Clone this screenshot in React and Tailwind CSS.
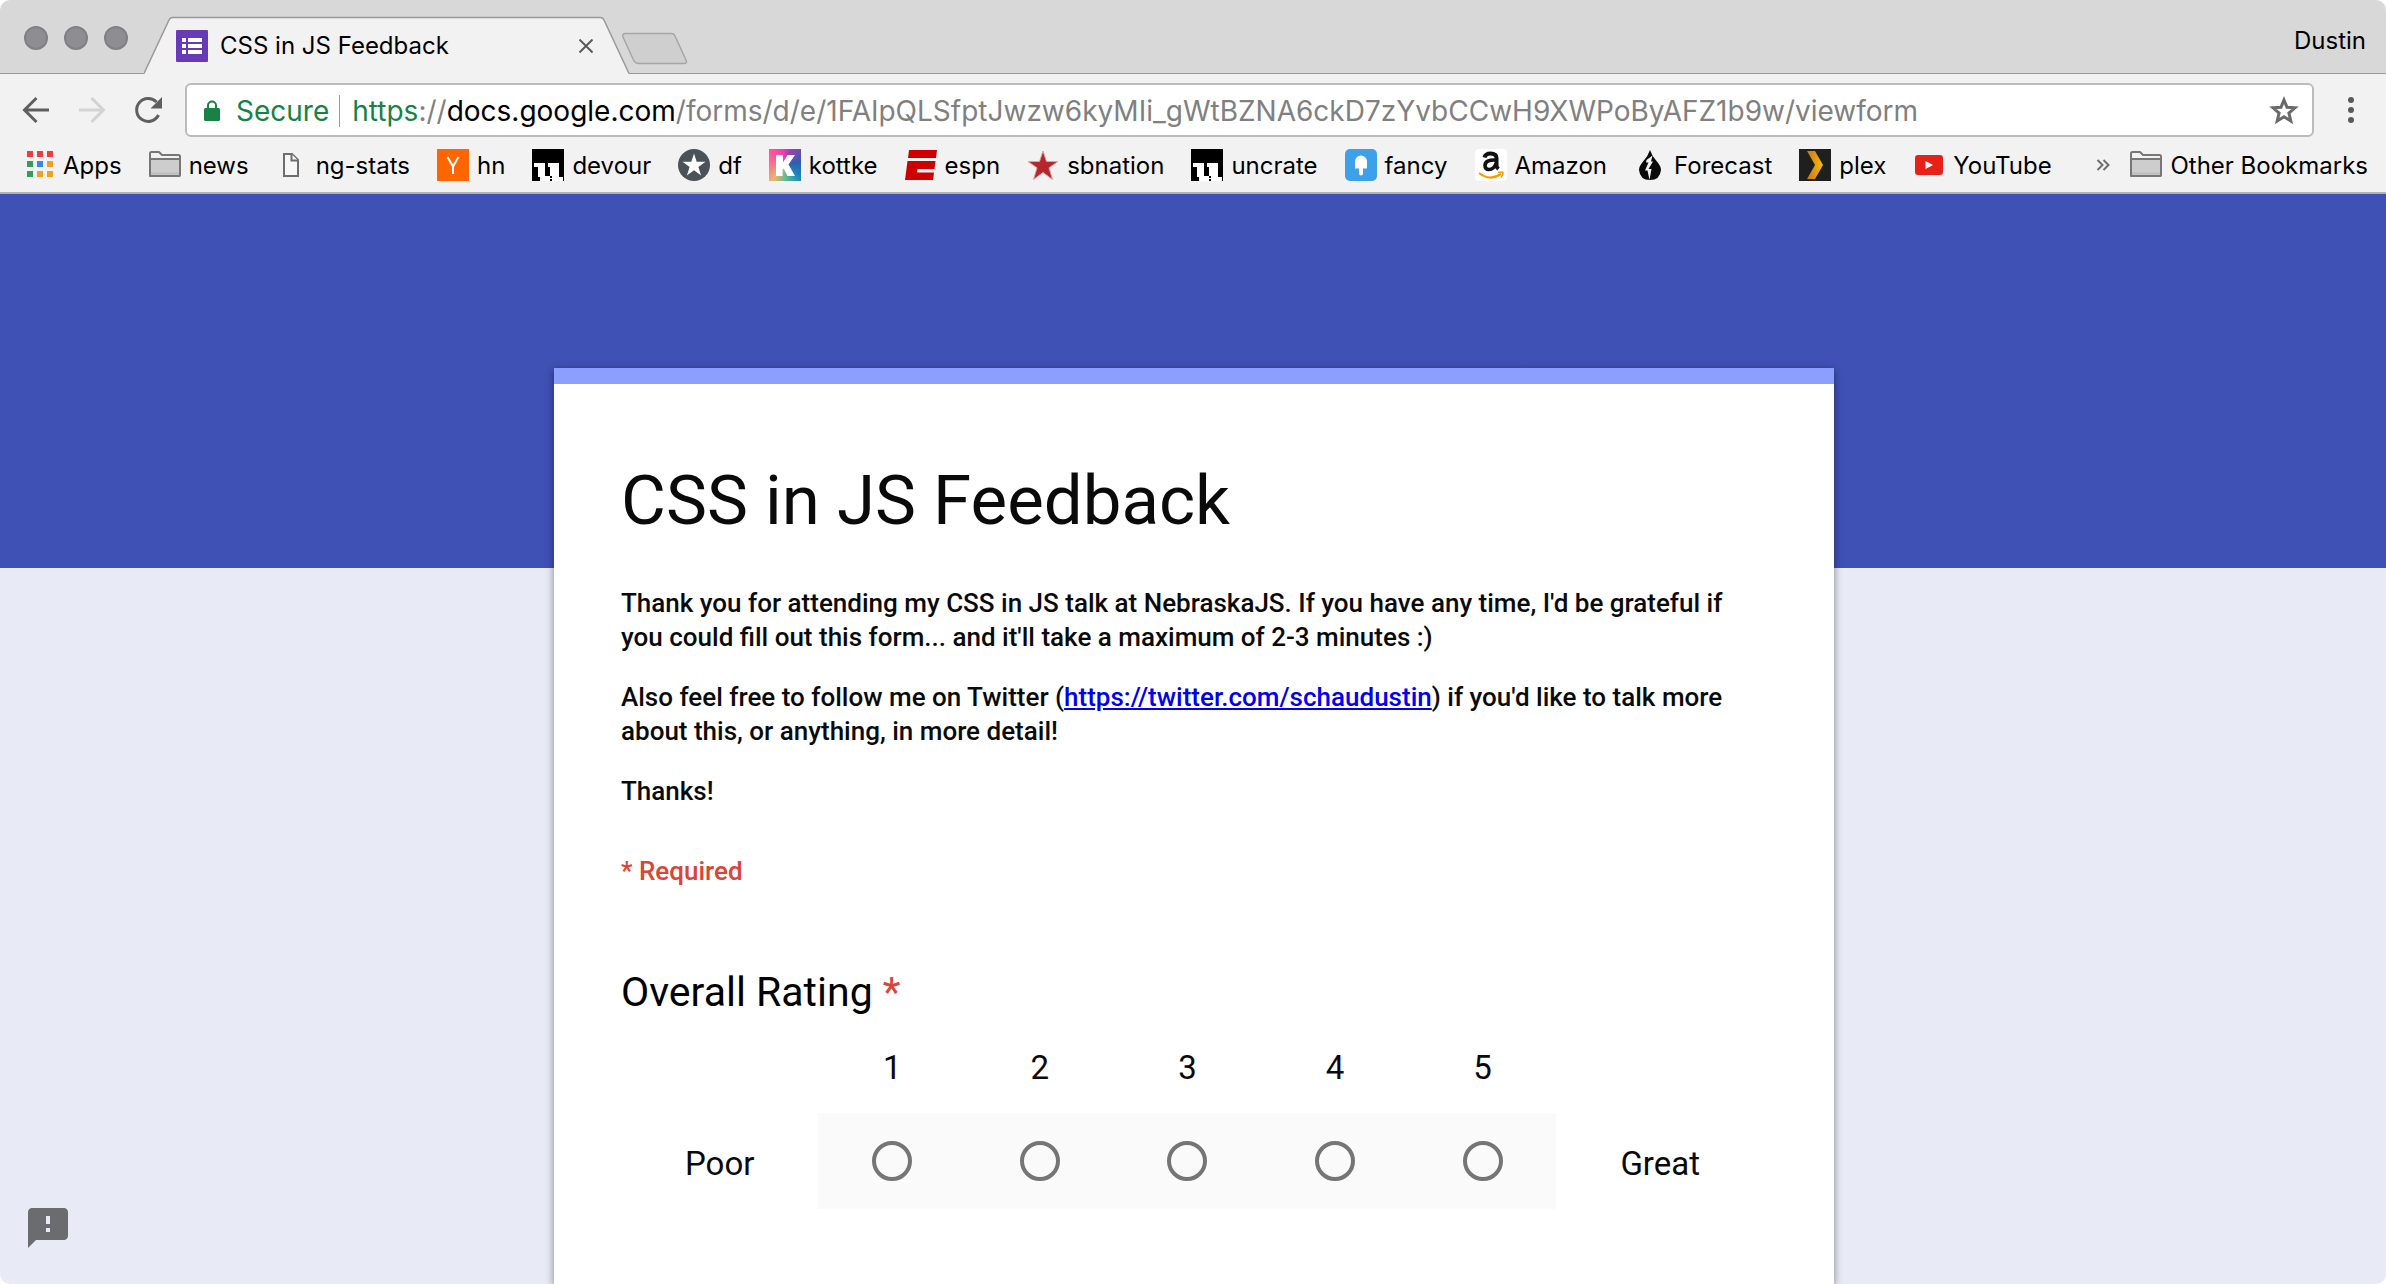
import React from "react";

const ui = "font-['Inter',sans-serif]";

function Folder() {
  return (
    <svg viewBox="0 0 32 32" className="size-8 shrink-0" fill="#cdcdcd" stroke="#777" strokeWidth="2" strokeLinejoin="round">
      <path d="M1 27V4.500q0-1.500 1.500-1.500H10l3 3H29.500Q31 6 31 7.500V25.500Q31 27 29.500 27Z" fill="#f2f2f2" />
      <path d="M1 10H31V25.500Q31 27 29.500 27H2.500Q1 27 1 25.500Z" />
      <path d="M2 24.500H30" stroke="#bdbdbd" />
    </svg>
  );
}

function Uncrate() {
  return (
    <svg viewBox="0 0 32 32" className="size-8 shrink-0" shapeRendering="crispEdges">
      <path d="M0 0H32V32H0Z" fill="#000" />
      <path d="M2 14H13V27H18V18H16V14H27V28H31V32H8V28H6V18H2Z" fill="#fff" />
      <path d="M18 27H20V29H18ZM18 30H20V32H18Z" fill="#000" />
    </svg>
  );
}

const icons = {
  apps: (
    <svg viewBox="0 0 32 32" className="size-8 shrink-0">
      {[
        ["#f33b3b", "#f33b3b", "#f33b3b"],
        ["#359d5a", "#2a8cf4", "#f0a022"],
        ["#359d5a", "#f0a022", "#f0a022"],
      ].map((row, r) => row.map((c, i) => <rect key={r + "-" + i} x={4 + i * 10} y={2 + r * 10} width="6" height="6" fill={c} />))}
    </svg>
  ),
  folder: <Folder />,
  file: (
    <svg viewBox="0 0 32 32" className="size-8 shrink-0" fill="#f7f7f7" stroke="#6e6e6e" strokeWidth="2">
      <path d="M8 5H16L22 11V27H8Z" />
      <path d="M15.500 5V11.500H22" />
    </svg>
  ),
  hn: (
    <svg viewBox="0 0 32 32" className="size-8 shrink-0">
      <path d="M0 0H32V32H0Z" fill="#ff6600" />
      <path d="M10.500 8L16 17.500L21.500 8M16 17V25" fill="none" stroke="#fff" strokeWidth="2" />
    </svg>
  ),
  uncrate: <Uncrate />,
  df: (
    <svg viewBox="0 0 32 32" className="size-8 shrink-0">
      <circle cx="16" cy="16" r="16" fill="#4a525a" />
      <path d="M16 4.500L18.700 12.800H27.500L20.400 18L23.100 26.400L16 21.200L8.900 26.400L11.600 18L4.500 12.800H13.300Z" fill="#fff" />
    </svg>
  ),
  kottke: (
    <span className="flex size-8 shrink-0 items-center justify-center bg-[conic-gradient(from_20deg,#a03fae,#2b5fae_60deg,#1f86b8_110deg,#4fb99a_150deg,#e8b56f_200deg,#f67f86_240deg,#ff4fa0_300deg,#f03fae_330deg,#a03fae)]">
      <svg viewBox="0 0 32 32" className="size-8" fill="#fff">
        <path d="M7 6H14V13.500L18.500 6H26L19.500 15.500L26 27H18.500L14.500 19.500L13.500 21V27H7Z" />
      </svg>
    </span>
  ),
  espn: (
    <svg viewBox="0 0 32 32" className="size-8 shrink-0" fill="#cc0000">
      <path d="M4 1H32L31 9H3ZM2.500 12H30.500L29.500 20H12.500L12 23.500H29L28 31H0Z" />
    </svg>
  ),
  sbnation: (
    <svg viewBox="0 0 32 32" className="size-8 shrink-0">
      <path d="M16 2L19.500 12.500H31L22 18.800L25.500 30.500L16 23.500L6.500 30.500L10 18.800L1 12.500H12.500Z" fill="#b5262d" stroke="#d9a3a3" strokeWidth="1" />
    </svg>
  ),
  fancy: (
    <svg viewBox="0 0 32 32" className="size-8 shrink-0">
      <rect width="32" height="32" rx="5" fill="#3ca1e8" />
      <path d="M10 12.500a6 6 0 0 1 12 0V19.500H18V24.500a2 2 0 0 1-4 0V19.500H10Z" fill="#fff" />
    </svg>
  ),
  amazon: (
    <svg viewBox="0 0 32 32" className="size-8 shrink-0">
      <rect width="32" height="32" rx="4" fill="#fff" />
      <path d="M9.500 8.500Q10.500 4.500 15.500 4.500Q21.500 4.500 21.500 9V16.500Q21.500 18.500 23.500 20" fill="none" stroke="#111" strokeWidth="4" />
      <path d="M21 11Q10 10.500 10 16.500Q10 20.500 14 20.500Q19 20.500 21 14.500" fill="none" stroke="#111" strokeWidth="3.600" />
      <path d="M4 24Q15 32.500 26 25" fill="none" stroke="#f90" strokeWidth="2.200" />
      <path d="M23 23.500Q28 22.500 28 23.500Q28 26 26 28.500" fill="none" stroke="#f90" strokeWidth="1.600" />
    </svg>
  ),
  forecast: (
    <svg viewBox="0 0 32 32" className="size-8 shrink-0">
      <path d="M16 1Q18 7 22.500 12Q27 17 27 21Q26 31 16 31Q6 31 5 21Q5 17 9.500 12Q14 7 16 1Z" fill="#0a0a0a" />
      <path d="M12.500 11L18.500 6.500L17 12.500H19L14.500 20H17.500L15.500 31L13.500 21.500H11L14.500 13.500H12Z" fill="#f2f2f2" />
    </svg>
  ),
  plex: (
    <svg viewBox="0 0 32 32" className="size-8 shrink-0">
      <defs>
        <radialGradient id="plexGold" cx="1" cy="0.500" r="1">
          <stop offset="0" stopColor="#f9be03" />
          <stop offset="1" stopColor="#cc7c19" />
        </radialGradient>
      </defs>
      <path d="M0 0H32V32H0Z" fill="#1f1f1f" />
      <path d="M8 2H16L24 16L16 30H8L16 16Z" fill="url(#plexGold)" />
    </svg>
  ),
  youtube: (
    <svg viewBox="0 0 32 32" className="size-8 shrink-0">
      <rect x="2" y="6" width="28" height="20" rx="3" fill="#e62117" />
      <path d="M12.500 12V20L20 16Z" fill="#fff" />
    </svg>
  ),
};

const bookmarks = [
  ["apps", "Apps"],
  ["folder", "news"],
  ["file", "ng-stats"],
  ["hn", "hn"],
  ["uncrate", "devour"],
  ["df", "df"],
  ["kottke", "kottke"],
  ["espn", "espn"],
  ["sbnation", "sbnation"],
  ["uncrate", "uncrate"],
  ["fancy", "fancy"],
  ["amazon", "Amazon"],
  ["forecast", "Forecast"],
  ["plex", "plex"],
  ["youtube", "YouTube"],
];

function TitleBar() {
  return (
    <header className="flex h-[74px] items-end justify-between border-b border-[#999] bg-[#d8d8d8]">
      <div className="flex h-full">
        <div className="flex w-36 items-center gap-4 pt-0.5 pl-6">
          {["Close window", "Minimise window", "Zoom window"].map((n) => (
            <button key={n} aria-label={n} className="size-6 rounded-full border-2 border-[#807f84] bg-[#8e8d92]" />
          ))}
        </div>
        <div className="relative mt-4 h-[58px] w-[486px]">
          <svg viewBox="0 0 486 58" className="absolute inset-0 h-[58px] w-[486px]">
            <path d="M0 58L25 4Q26 1.500 29 1.500H456Q459 1.500 460 4L485 58Z" fill="#f2f2f2" />
            <path d="M0 57.500L25 4Q26 1.500 29 1.500H456Q459 1.500 460 4L485 57.500" fill="none" stroke="#999" strokeWidth="1.500" />
          </svg>
          <div className="relative flex h-[60px] items-center pr-[37px] pl-8">
            <svg viewBox="0 0 32 32" className="mr-3 size-8 shrink-0">
              <rect width="32" height="32" rx="1" fill="#673ab7" />
              <path d="M6 8H10V12H6ZM12 8H26V12H12ZM6 14H10V18H6ZM12 14H26V18H12ZM6 20H10V24H6ZM12 20H26V24H12Z" fill="#fff" />
            </svg>
            <span className="flex-1 text-2xl text-black">CSS in JS Feedback</span>
            <button aria-label="Close tab">
              <svg viewBox="0 0 14 14" className="size-3.5" stroke="#5a5a5a" strokeWidth="2">
                <path d="M0.500 0.500L13.500 13.500M13.500 0.500L0.500 13.500" />
              </svg>
            </button>
          </div>
        </div>
        <button aria-label="New tab" className="-ml-2 self-start pt-8">
          <svg viewBox="0 0 66 34" className="h-[34px] w-[66px]">
            <path d="M3 1.500H49Q52 1.500 53 4L64 28Q65.500 31.500 62 31.500H17Q13 31.500 11.500 28L1 5Q0 1.500 3 1.500Z" fill="#cfcfcf" stroke="#a6a6a6" strokeWidth="1.500" />
          </svg>
        </button>
      </div>
      <span className="mr-5 mb-4 text-2xl text-black">Dustin</span>
    </header>
  );
}

function Toolbar() {
  return (
    <div className="flex items-center bg-[#f2f2f2] pt-[9px] pr-8 pl-5">
      <div className="flex gap-6">
        <button aria-label="Back">
          <svg viewBox="0 0 32 32" className="size-8" fill="none" stroke="#5f5f5f" strokeWidth="3">
            <path d="M29 16H5M16.500 4L4.500 16L16.500 28" />
          </svg>
        </button>
        <button aria-label="Forward" disabled>
          <svg viewBox="0 0 32 32" className="size-8" fill="none" stroke="#d3d3d3" strokeWidth="3">
            <path d="M3 16H27M15.500 4L27.500 16L15.500 28" />
          </svg>
        </button>
        <button aria-label="Reload">
          <svg viewBox="0 0 32 32" className="size-8">
            <path d="M26.500 21A11.500 11.500 0 1 1 24.500 8" fill="none" stroke="#5f5f5f" strokeWidth="3" />
            <path d="M30 3V14.500H18.500Z" fill="#5f5f5f" />
          </svg>
        </button>
      </div>
      <div className="ml-[21px] flex h-[54px] flex-1 items-center rounded-md border-2 border-[#bbb] bg-white pt-0.5 pr-3 pl-[17px] text-[28px]">
        <svg viewBox="0 0 16 22" className="mr-4 h-[22px] w-4">
          <path d="M4 10V5.500a4 4 0 0 1 8 0V10" fill="none" stroke="#188245" strokeWidth="2" />
          <rect y="8" width="16" height="13" rx="1.500" fill="#188245" />
        </svg>
        <span className="text-[#188245]">Secure</span>
        <span className="mr-3 ml-2.5 h-8 w-px bg-[#999]" />
        <div className="flex-1 whitespace-nowrap text-[#808080]">
          <span className="text-[#188245]">https</span>://<span className="text-black">docs.google.com</span>/forms/d/e/1FAIpQLSfptJwzw6kyMIi_gWtBZNA6ckD7zYvbCCwH9XWPoByAFZ1b9w/viewform
        </div>
        <button aria-label="Bookmark this page">
          <svg viewBox="0 0 32 32" className="size-8" fill="none" stroke="#6a6a6a" strokeWidth="3">
            <path d="M16 5L19 12.200L27 12.800L20.900 18L22.800 26L16 21.700L9.200 26L11.100 18L5 12.800L13 12.200Z" />
          </svg>
        </button>
      </div>
      <button aria-label="Menu" className="ml-[34px] flex flex-col gap-1">
        <i className="size-1.5 rounded-full bg-[#5a5a5a]" />
        <i className="size-1.5 rounded-full bg-[#5a5a5a]" />
        <i className="size-1.5 rounded-full bg-[#5a5a5a]" />
      </button>
    </div>
  );
}

function Bookmarks() {
  return (
    <nav className="flex h-[57px] items-center justify-between border-b-2 border-[#b3b3b3] bg-[#f2f2f2] pt-px pr-[18px] pl-[23px] text-2xl text-black">
      <div className="flex gap-[27px]">
        {bookmarks.map(([icon, label]) => (
          <a key={label} href="#" className="flex items-center gap-2">
            {icons[icon]}
            <span className="pt-0.5">{label}</span>
          </a>
        ))}
      </div>
      <div className="flex items-center">
        <button aria-label="More bookmarks" className="mr-5">
          <svg viewBox="0 0 14 14" className="size-3.5" fill="none" stroke="#6e6e6e" strokeWidth="2">
            <path d="M1.500 2L6.500 7L1.500 12M7.500 2L12.500 7L7.500 12" />
          </svg>
        </button>
        <a href="#" className="flex items-center gap-2">
          <Folder />
          <span className="pt-0.5">Other Bookmarks</span>
        </a>
      </div>
    </nav>
  );
}

function Rating() {
  return (
    <fieldset className="mt-[77px]">
      <legend className="text-[41px] leading-[54px] text-black">
        Overall Rating <span className="text-[#db4437]">*</span>
      </legend>
      <div className="flex items-end pr-[3px] text-[33px] leading-10">
        <span className="flex h-24 items-center justify-center px-16 pt-1.5">Poor</span>
        <div className="flex flex-1">
          {[1, 2, 3, 4, 5].map((n) => (
            <label key={n} className="flex flex-1 flex-col items-center">
              <span className="pt-[29px] pb-[25px]">{n}</span>
              <span className="flex h-24 items-center justify-center self-stretch bg-[#fafafa]">
                <input type="radio" name="rating" value={n} className="size-10 appearance-none rounded-full border-4 border-[#757575] checked:bg-[#3f51b5]" />
              </span>
            </label>
          ))}
        </div>
        <span className="flex h-24 items-center justify-center px-16 pt-1.5">Great</span>
      </div>
    </fieldset>
  );
}

export default function App() {
  return (
    <div className="h-screen bg-white">
      <div className={"relative flex h-full flex-col overflow-hidden rounded-[10px] " + ui}>
        <TitleBar />
        <Toolbar />
        <Bookmarks />
        <main className="min-h-0 flex-1 overflow-hidden bg-[#e8eaf6] bg-linear-to-b from-[#3f51b5] to-[#3f51b5] bg-[length:100%_374px] bg-no-repeat pt-[174px] pl-0.5 font-['Roboto',sans-serif] text-[#0a0a0a]">
          <form className="mx-auto min-h-full max-w-[1280px] border-t-[16px] border-[#8c9eff] bg-white px-[67px] pt-[71px] shadow-[0_2px_8px_rgba(0,0,0,0.45)]">
            <h1 className="text-[69px] leading-[92px]">CSS in JS Feedback</h1>
            <div className="mt-[39px] space-y-[26px] text-[26px] leading-[34px] font-medium">
              <p>
                Thank you for attending my CSS in JS talk at NebraskaJS. If you have any time, I'd be grateful if you could fill out this form... and it'll take a maximum of 2-3 minutes :)
              </p>
              <p>
                Also feel free to follow me on Twitter (
                <a href="https://twitter.com/schaudustin" className="text-[#0000ee] underline">
                  https://twitter.com/schaudustin
                </a>
                ) if you'd like to talk more about this, or anything, in more detail!
              </p>
              <p>Thanks!</p>
            </div>
            <p className="mt-[46px] text-[26px] leading-[34px] font-medium text-[#db4437]">* Required</p>
            <Rating />
          </form>
        </main>
        <button aria-label="Report a problem" className="absolute bottom-8 left-6">
          <svg viewBox="0 0 24 24" className="size-12" fill="#6b6c70">
            <path d="M20 2H4c-1.100 0-1.990.9-1.990 2L2 22l4-4h14c1.100 0 2-.9 2-2V4c0-1.100-.9-2-2-2zm-7 12h-2v-2h2v2zm0-4h-2V6h2v4z" />
          </svg>
        </button>
      </div>
    </div>
  );
}
